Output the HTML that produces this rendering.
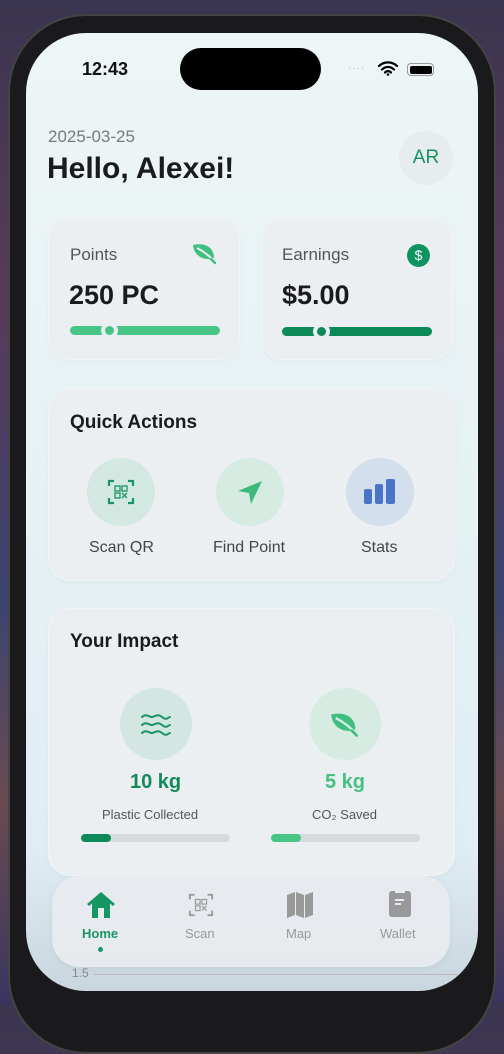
<!DOCTYPE html>
<html><head><meta charset="utf-8"><style>
*{margin:0;padding:0;box-sizing:border-box}
body{width:504px;height:1002px;overflow:hidden;position:relative;font-family:"Liberation Sans",sans-serif;background:linear-gradient(180deg,#3a3550 0%,#5a3a5a 30%,#3c4470 60%,#6a4a50 80%,#3a3660 100%)}
.frame{position:absolute;left:8px;top:14px;width:488px;height:1040px;background:#1a1a1c;border-radius:78px;border:2px solid #444}
.screen{position:absolute;left:26px;top:33px;width:452px;height:958px;border-radius:60px;overflow:hidden;background:linear-gradient(180deg,#eef5f6 0%,#e6f1f4 50%,#e0edf5 85%,#c9d6de 100%)}
.abs{position:absolute}
.card{position:absolute;background:#eceff1;border:1px solid #f2f5f6;border-radius:22px;box-shadow:0 2px 6px rgba(0,0,0,0.03)}
.t{position:absolute;white-space:nowrap}
.circ{position:absolute;border-radius:50%}
</style></head><body>
<div class="frame"></div>
<div class="screen">
 <div class="t" style="left:56px;top:26px;font-size:18px;font-weight:bold;color:#111">12:43</div>
 <div class="abs" style="left:154px;top:15px;width:141px;height:42px;background:#000;border-radius:21px"></div>
 <div class="t" style="left:322px;top:30px;font-size:10px;color:#bbb;letter-spacing:1px">····</div>
 <svg class="abs" style="left:352px;top:28px" width="20" height="15" viewBox="0 0 20 15"><path d="M1 5a13 13 0 0 1 18 0M4 8.5a8.5 8.5 0 0 1 12 0M7 11.5a4 4 0 0 1 6 0" stroke="#000" stroke-width="2.2" fill="none" stroke-linecap="round"/><circle cx="10" cy="13.5" r="1.3"/></svg>
 <div class="abs" style="left:381px;top:30px;width:27px;height:13px;border:1.5px solid #999;border-radius:4px;padding:1.5px"><div style="width:100%;height:100%;background:#000;border-radius:2px"></div></div>

 <div class="t" style="left:22px;top:94px;font-size:17px;color:#7a7a7a">2025-03-25</div>
 <div class="t" style="left:21px;top:119px;font-size:30px;font-weight:bold;color:#1a1a1f">Hello, Alexei!</div>
 <div class="circ" style="left:373px;top:98px;width:54px;height:54px;background:#e7ecee;color:#17935e;font-size:19px;text-align:center;line-height:54px">AR</div>

 <div class="card" style="left:22px;top:184px;width:192px;height:143px"></div>
 <div class="t" style="left:44px;top:212px;font-size:17px;color:#555">Points</div>
 <svg class="abs" style="left:166px;top:210px" width="26" height="22" viewBox="0 0 26 22"><path d="M1 2C9 0 20 1 22 13C22 15 21 16 19 16C10 17 2 12 1 2Z" fill="#3fbf7f"/><path d="M5 5C11 8 17 12 24 20" stroke="#eceff1" stroke-width="2" fill="none"/><path d="M19 16l4 4" stroke="#3fbf7f" stroke-width="2.4" stroke-linecap="round"/></svg>
 <div class="t" style="left:43px;top:247px;font-size:27px;font-weight:bold;color:#1a1a1f">250 PC</div>
 <div class="abs" style="left:44px;top:293px;width:150px;height:9px;background:#46c585;border-radius:5px"></div>
 <div class="circ" style="left:75px;top:289px;width:17px;height:17px;background:#eceff1"></div>
 <div class="circ" style="left:79px;top:293px;width:9px;height:9px;background:#46c585"></div>

 <div class="card" style="left:235px;top:184px;width:192px;height:143px"></div>
 <div class="t" style="left:256px;top:212px;font-size:17px;color:#555">Earnings</div>
 <div class="circ" style="left:381px;top:211px;width:23px;height:23px;background:#0f9460;color:#fff;font-size:14px;text-align:center;line-height:23px">$</div>
 <div class="t" style="left:256px;top:247px;font-size:27px;font-weight:bold;color:#1a1a1f">$5.00</div>
 <div class="abs" style="left:256px;top:294px;width:150px;height:9px;background:#0b8a58;border-radius:5px"></div>
 <div class="circ" style="left:287px;top:290px;width:17px;height:17px;background:#eceff1"></div>
 <div class="circ" style="left:291px;top:294px;width:9px;height:9px;background:#0b8a58"></div>

 <div class="card" style="left:22px;top:355px;width:407px;height:193px"></div>
 <div class="t" style="left:44px;top:379px;font-size:19px;font-weight:bold;color:#1a1a1f">Quick Actions</div>
 <div class="circ" style="left:61px;top:425px;width:68px;height:68px;background:#d2e8e0"></div>
 <svg class="abs" style="left:81px;top:445px" width="28" height="28" viewBox="0 0 28 28" fill="none" stroke="#169663" stroke-width="2.2"><path d="M2 8V3h5M21 3h5v5M26 20v5h-5M7 25H2v-5"/><g stroke-width="1.3"><rect x="8" y="8" width="5" height="5"/><rect x="15" y="8" width="5" height="5"/><rect x="8" y="15" width="5" height="5"/><path d="M15 15l5 5M20 15l-5 5"/></g></svg>
 <div class="t" style="left:63px;top:506px;font-size:16px;color:#444">Scan QR</div>
 <div class="circ" style="left:190px;top:425px;width:68px;height:68px;background:#d6ebe2"></div>
 <svg class="abs" style="left:210px;top:446px" width="28" height="28" viewBox="0 0 28 28"><path d="M26 2L2 12l11 2 2 11z" fill="#3db97a"/></svg>
 <div class="t" style="left:187px;top:506px;font-size:16px;color:#444">Find Point</div>
 <div class="circ" style="left:320px;top:425px;width:68px;height:68px;background:#d3dfec"></div>
 <svg class="abs" style="left:337px;top:446px" width="36" height="26" viewBox="0 0 36 26" fill="#4a74c6"><rect x="1" y="10" width="8" height="15" rx="2"/><rect x="12" y="5" width="8" height="20" rx="2"/><rect x="23" y="0" width="9" height="25" rx="2"/></svg>
 <div class="t" style="left:335px;top:506px;font-size:16px;color:#444">Stats</div>

 <div class="card" style="left:22px;top:575px;width:407px;height:268px"></div>
 <div class="t" style="left:44px;top:598px;font-size:19px;font-weight:bold;color:#1a1a1f">Your Impact</div>
 <div class="circ" style="left:94px;top:655px;width:72px;height:72px;background:#d3e6e1"></div>
 <svg class="abs" style="left:115px;top:680px" width="30" height="24" viewBox="0 0 30 24" fill="none" stroke="#1a9466" stroke-width="2" stroke-linecap="round"><path d="M1 4c4-4 7 0 10 0s5-4 10 0 6 0 8 0M1 12c4-4 7 0 10 0s5-4 10 0 6 0 8 0M1 20c4-4 7 0 10 0s5-4 10 0 6 0 8 0"/></svg>
 <div class="t" style="left:104px;top:738px;font-size:20px;font-weight:bold;color:#138a5a">10 kg</div>
 <div class="t" style="left:76px;top:774px;font-size:13px;color:#555">Plastic Collected</div>
 <div class="abs" style="left:55px;top:801px;width:149px;height:8px;background:#d6dade;border-radius:4px"><div style="width:30px;height:8px;background:#0e8a5a;border-radius:4px"></div></div>
 <div class="circ" style="left:283px;top:655px;width:72px;height:72px;background:#d6ebe2"></div>
 <svg class="abs" style="left:304px;top:679px" width="30" height="26" viewBox="0 0 26 22"><path d="M1 2C9 0 20 1 22 13C22 15 21 16 19 16C10 17 2 12 1 2Z" fill="#3fbf7f"/><path d="M5 5C11 8 17 12 24 20" stroke="#d6ebe2" stroke-width="2" fill="none"/><path d="M19 16l4 4" stroke="#3fbf7f" stroke-width="2.4" stroke-linecap="round"/></svg>
 <div class="t" style="left:299px;top:738px;font-size:20px;font-weight:bold;color:#43c182">5 kg</div>
 <div class="t" style="left:286px;top:774px;font-size:13px;color:#555">CO₂ Saved</div>
 <div class="abs" style="left:245px;top:801px;width:149px;height:8px;background:#d6dade;border-radius:4px"><div style="width:30px;height:8px;background:#46c585;border-radius:4px"></div></div>

 <div class="t" style="left:46px;top:933px;font-size:12px;color:#888">1.5</div>
 <div class="abs" style="left:68px;top:941px;width:364px;height:1px;background:#bbb"></div>
 <div class="abs" style="left:26px;top:843px;width:398px;height:91px;border-radius:28px;background:rgba(232,236,239,0.92);box-shadow:0 2px 8px rgba(0,0,0,0.05)"></div>
 <svg class="abs" style="left:60px;top:858px" width="30" height="28" viewBox="0 0 30 28" fill="#169663"><path d="M15 1L1 13l2 2 3-2.5V27h18V12.5l3 2.5 2-2z"/><rect x="12" y="17" width="6" height="10" fill="#e8ecef"/></svg>
 <div class="t" style="left:56px;top:893px;font-size:13px;font-weight:bold;color:#169663">Home</div>
 <div class="circ" style="left:72px;top:914px;width:5px;height:5px;background:#169663"></div>
 <svg class="abs" style="left:162px;top:859px" width="26" height="26" viewBox="0 0 28 28" fill="none" stroke="#999" stroke-width="2"><path d="M2 8V3h5M21 3h5v5M26 20v5h-5M7 25H2v-5"/><g stroke-width="1.3"><rect x="8" y="8" width="5" height="5"/><rect x="15" y="8" width="5" height="5"/><rect x="8" y="15" width="5" height="5"/><path d="M15 15l5 5M20 15l-5 5"/></g></svg>
 <div class="t" style="left:159px;top:893px;font-size:13px;color:#999">Scan</div>
 <svg class="abs" style="left:261px;top:858px" width="26" height="28" viewBox="0 0 26 28" fill="#999"><path d="M0 4l8-3v23l-8 3zM9 1l8 3v23l-8-3zM18 4l8-3v23l-8 3z"/></svg>
 <div class="t" style="left:260px;top:893px;font-size:13px;color:#999">Map</div>
 <svg class="abs" style="left:363px;top:857px" width="22" height="28" viewBox="0 0 22 28"><rect x="0" y="1" width="22" height="26" rx="3" fill="#999"/><path d="M6 0h10v3H6z" fill="#e8ecef"/><path d="M6 10h9M6 14h6" stroke="#e8ecef" stroke-width="2"/></svg>
 <div class="t" style="left:354px;top:893px;font-size:13px;color:#999">Wallet</div>
</div>
</body></html>
